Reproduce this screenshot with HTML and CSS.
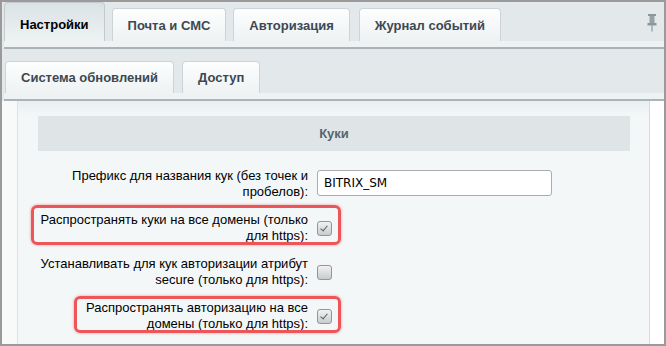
FILE: index.html
```html
<!DOCTYPE html>
<html lang="ru">
<head>
    <meta charset="UTF-8">
    <meta name="viewport" content="width=device-width, initial-scale=1.0">
    <title>Настройки</title>
    <link rel="stylesheet" href="styles.css">
</head>
<body>

    <div class="frame">
        <div class="tabs tabs-top">
            <div class="tab active">Настройки</div>
            <div class="tab">Почта и СМС</div>
            <div class="tab">Авторизация</div>
            <div class="tab tab-log">Журнал событий</div>
            <svg class="pin" width="10" height="18" viewBox="0 0 10 18">
                <rect x="1" y="0" width="8" height="2" fill="#8c979d"/>
                <rect x="2.5" y="2" width="5" height="7" fill="#97a2a8"/>
                <rect x="0.5" y="9" width="9" height="2.5" fill="#8c979d"/>
                <rect x="4.4" y="11.5" width="1.2" height="6" fill="#8c979d"/>
            </svg>
        </div>
        <div class="tab-bar"></div>

        <div class="tabs tabs-second">
            <div class="tab">Система обновлений</div>
            <div class="tab">Доступ</div>
        </div>
        <div class="tab-bar"></div>

        <div class="content">
            <div class="side-left"></div>
            <div class="panel">
                <div class="section-head">Куки</div>

                <div class="row">
                    <div class="label">Префикс для названия кук (без точек и пробелов):</div>
                    <div class="field"><input class="text-input" type="text" value="BITRIX_SM"></div>
                </div>

                <div class="row">
                    <div class="label">Распространять куки на все домены (только для https):</div>
                    <div class="field"><span class="checkbox checked"></span></div>
                    <div class="mark mark-cookie"></div>
                </div>

                <div class="row">
                    <div class="label">Устанавливать для кук авторизации атрибут secure (только для https):</div>
                    <div class="field"><span class="checkbox"></span></div>
                </div>

                <div class="row">
                    <div class="label">Распространять авторизацию на все домены (только для https):</div>
                    <div class="field"><span class="checkbox checked"></span></div>
                    <div class="mark mark-auth"></div>
                </div>
            </div>
            <div class="side-right"></div>
        </div>
    </div>

</body>
</html>
```

FILE: styles.css
```css
body {
    margin: 0;
    font-family: "Liberation Sans", Arial, sans-serif;
    font-size: 13px;
}
.frame {
    width: 662px;
    height: 342px;
    border: 2px solid #9a9a9a;
    background-color: #e3e9eb;
    overflow: hidden;
}
.tabs {
    display: flex;
    align-items: flex-end;
    gap: 7px;
}
.tabs-top {
    height: 39px;
    padding-left: 2px;
    position: relative;
}
.tabs-second {
    height: 32px;
    padding-left: 3px;
    margin-top: 12px;
    gap: 8px;
}
.tab {
    height: 32px;
    line-height: 32px;
    padding: 0 15px;
    box-sizing: border-box;
    border: 1px solid #cdd4d7;
    border-bottom: none;
    border-radius: 4px 4px 0 0;
    background: linear-gradient(#fdfefe, #eef2f3);
    font-weight: bold;
    color: #3c4852;
}
.tabs-top .tab {
    height: 33px;
    line-height: 34px;
}
.tabs-top .tab.active {
    height: 39px;
    line-height: 44px;
    color: #000;
    border-color: #c2cacd;
    background: linear-gradient(#dbe2e5, #eef2f3);
}
.tabs-top .tab-log {
    margin-left: 2px;
}
.tabs-second .tab {
    padding: 0 15px;
}
.pin {
    position: absolute;
    right: 7px;
    top: 12px;
}
.tab-bar {
    height: 6px;
    margin-left: 2px;
    background-color: #eef2f3;
    border-bottom: 2px solid #aab3b7;
}
.content {
    display: flex;
    height: 244px;
}
.side-left {
    width: 15px;
    background-color: #f8fafa;
    border-right: 1px solid #dde3e5;
}
.side-right {
    width: 14px;
    background-color: #ffffff;
    border-left: 1px solid #d3dbdf;
}
.panel {
    flex: 1;
    background: linear-gradient(#e9eef0, #f3f7f8 14px);
    padding-top: 15px;
}
.section-head {
    height: 35px;
    line-height: 35px;
    margin: 0 19px 11px 20px;
    background-color: #dfe5e6;
    text-align: center;
    font-weight: bold;
    color: #55656f;
}
.row {
    position: relative;
    display: flex;
    align-items: center;
    height: 44px;
}
.label {
    width: 268px;
    padding: 0 9px 0 22px;
    text-align: right;
    line-height: 16px;
    color: #000;
}
.text-input {
    width: 235px;
    height: 26px;
    box-sizing: border-box;
    margin-top: -2px;
    padding: 0 6px;
    border: 1px solid #a9adb0;
    border-radius: 3px;
    background: #fff;
    font-family: "DejaVu Sans", Verdana, sans-serif;
    font-size: 12px;
    color: #000;
}
.checkbox {
    display: block;
    width: 15px;
    height: 15px;
    box-sizing: border-box;
    border: 1px solid #8f979b;
    border-radius: 3px;
    background: linear-gradient(#f2f2f2, #c9cbcc);
    position: relative;
}
.checkbox.checked::after {
    content: "";
    position: absolute;
    left: 4px;
    top: 2px;
    width: 3px;
    height: 6px;
    border: solid #5b5f62;
    border-width: 0 1.5px 1.5px 0;
    transform: rotate(40deg);
}
.mark {
    position: absolute;
    box-sizing: border-box;
    border: 3px solid #ec5658;
    border-radius: 6px;
    box-shadow: 0 0 3px rgba(236, 86, 88, 0.6);
}
.mark-cookie {
    top: -1px;
    left: 13px;
    width: 310px;
    height: 40px;
}
.mark-auth {
    top: 2px;
    left: 56px;
    width: 267px;
    height: 37px;
}
```
